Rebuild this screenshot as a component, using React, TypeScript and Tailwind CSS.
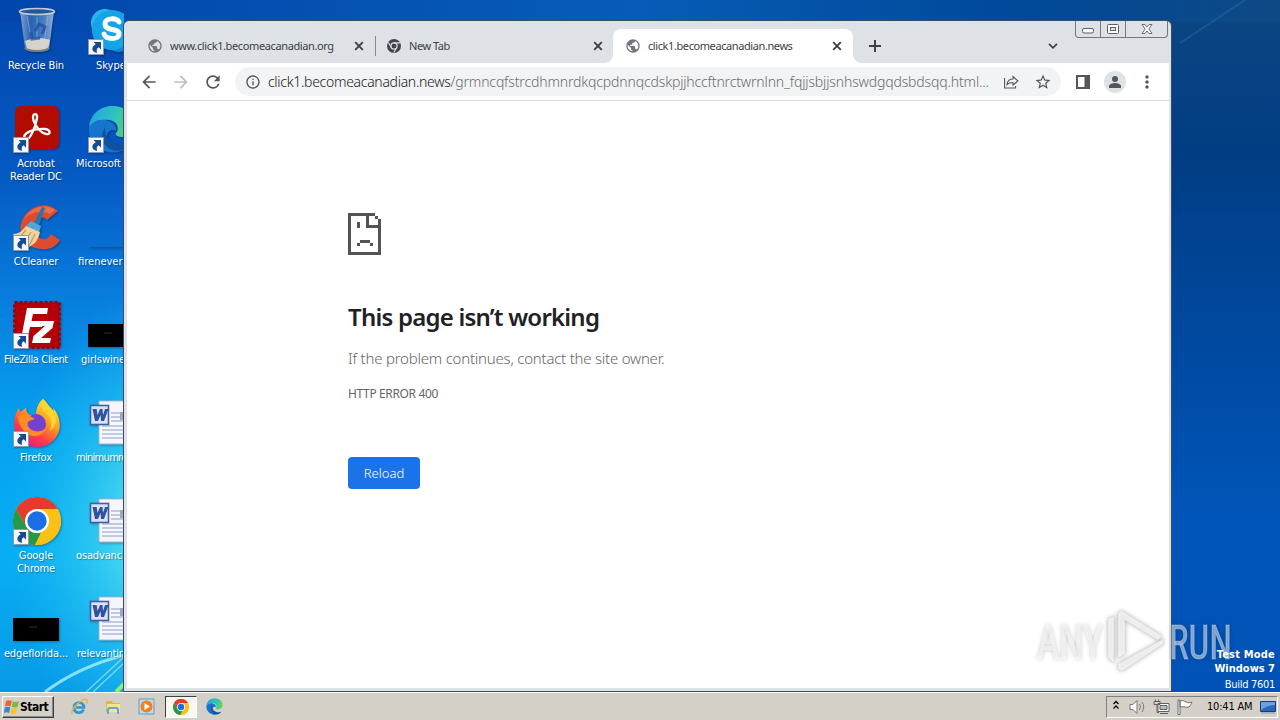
import React from "react";
import { MdArrowBack, MdArrowForward, MdRefresh, MdInfoOutline, MdStarBorder, MdMoreVert, MdPublic } from "react-icons/md";
import { clsx } from "clsx";

/* ──────────────────────────────────────────────────────────────────────────
 * Types
 * ────────────────────────────────────────────────────────────────────────── */

interface Shortcut {
  label: string;
  icon: React.ReactNode;
  linked?: boolean;
  className?: string;
}

interface TabProps {
  title: string;
  icon: React.ReactNode;
  active?: boolean;
  className?: string;
  titleClassName?: string;
}

/* ──────────────────────────────────────────────────────────────────────────
 * App icons
 * ────────────────────────────────────────────────────────────────────────── */

const ChromeIcon = ({ className }: { className?: string }) => (
  <svg viewBox="0 0 48 48" className={className}>
    <circle cx="24" cy="24" r="24" fill="#fbc116" />
    <path d="M24 24 13.6 30 3.2 12A24 24 0 0 1 44.8 12H24z" fill="#e33b2e" />
    <path d="M3.2 12 13.6 30a12 12 0 0 0 14.5 5.3L22 47.9A24 24 0 0 1 3.2 12z" fill="#279847" />
    <path d="M24 12h20.8A24 24 0 0 1 22 47.9L34.4 30a12 12 0 0 0 0-12z" fill="#fbc116" />
    <circle cx="24" cy="24" r="12" fill="#fff" />
    <circle cx="24" cy="24" r="9.7" fill="#1b6ee5" />
  </svg>
);

const EdgeIcon = ({ className }: { className?: string }) => (
  <svg viewBox="0 0 48 48" className={className}>
    <defs>
      <linearGradient id="edgeTop" x1="0" x2="1" y1="0.3" y2="0.5">
        <stop offset="0" stopColor="#22a6e2" />
        <stop offset="0.55" stopColor="#2fc3bf" />
        <stop offset="1" stopColor="#64d84c" />
      </linearGradient>
    </defs>
    <path d="M1 23C2 9 12 1 25 1c13 0 22 9 22 19 0 8-6 12-13 12-5 0-7-2-6-4 4-5 1-12-7-13C12 14 4 17 1 23z" fill="url(#edgeTop)" />
    <path d="M1 23c3-6 9-9 16-8 8 1 12 6 11 11-3-2-8-1-9 4-2 8 6 14 17 12 3-1 5-2 7-3C37 46 29 49 20 47 8 44 0 34 1 23z" fill="#1674cc" />
    <path d="M17 22c-4 7-4 14 1 19 4 4 10 6 17 4 4-1 7-4 9-7-6 4-15 3-20-1-5-3-7-8-7-15z" fill="#10529f" />
  </svg>
);

const RecycleBinIcon = () => (
  <svg viewBox="0 0 48 48" className="size-12">
    <defs>
      <linearGradient id="binGlass" x1="0" x2="1" y1="0" y2="0">
        <stop offset="0" stopColor="#8fb0dc" />
        <stop offset="0.3" stopColor="#2f69b4" />
        <stop offset="0.7" stopColor="#4f86c8" />
        <stop offset="1" stopColor="#a5bfe2" />
      </linearGradient>
    </defs>
    <path d="M7 4h34l-5 38c-4 4-20 4-24 0z" fill="url(#binGlass)" opacity="0.9" />
    <path d="M12 34c5-3 19-4 25-1l-2 9c-4 3-17 3-21 0z" fill="#d6d3cc" />
    <path d="m14 9 5 27M24 10v24M35 9l-4 26" stroke="#c1d6ef" strokeWidth="1" opacity="0.4" />
    <path d="m22 24 4-7 6 3-3 7M18 25l1 7 8-1" stroke="#1c4f9a" strokeWidth="3" fill="none" opacity="0.7" />
    <ellipse cx="24" cy="4.5" rx="17.5" ry="3" fill="#24589e" stroke="#c3cbd4" strokeWidth="1.6" />
    <path d="M12 41c4 4 20 4 24 0" stroke="#777f88" strokeWidth="2" fill="none" />
  </svg>
);

const SkypeIcon = () => (
  <svg viewBox="0 0 48 48" className="size-12">
    <circle cx="17" cy="16" r="14" fill="#28b6ee" />
    <circle cx="31" cy="31" r="14" fill="#0b87d5" />
    <circle cx="24" cy="23" r="20" fill="#16a4e8" />
    <path d="M31 15c-2-4-14-5-14 2 0 8 14 3 14 10 0 6-13 6-15 0" stroke="#fff" strokeWidth="5" fill="none" strokeLinecap="round" />
  </svg>
);

const AcrobatIcon = () => (
  <svg viewBox="0 0 48 48" className="size-12">
    <rect x="2" y="1" width="44" height="43" rx="6" fill="#b30b00" />
    <path d="M12 34c-4-6 10-11 20-10 6 1 6 6 1 5-6-1-13-11-13-17 0-4 5-4 4 1-1 8-8 25-12 21z" stroke="#fff" strokeWidth="2.3" fill="none" strokeLinejoin="round" />
  </svg>
);

const CCleanerIcon = () => (
  <svg viewBox="0 0 48 48" className="size-12">
    <path d="M45 8 34 17c-3-4-9-3-11 2-4 8 1 17 8 17 4 0 6-3 7-5l9 6c-4 7-11 10-18 9C14 45 5 36 8 21 11 6 31-5 45 8z" fill="#df4b31" />
    <path d="M11 16C18 4 32 0 42 7l-5 4C27 6 17 10 11 16z" fill="#f17a4b" opacity="0.7" />
    <path d="m29 4 3 1-6 17-5-2z" fill="#2675ae" />
    <path d="m18 18 10 5-2 6-13-6z" fill="#50a7dc" />
    <path d="m13 23 14 6c-2 9-6 13-12 15L0 31c6 0 9-3 13-8z" fill="#eed49c" />
    <path d="M13 27 6 35m12-6-7 11m11-9-6 12" stroke="#c89a59" strokeWidth="1.2" />
  </svg>
);

const FileZillaIcon = () => (
  <svg viewBox="0 0 48 48" className="size-12">
    <rect x="1.5" y="1.5" width="45" height="45" fill="#b60007" stroke="#9c0209" strokeWidth="3" strokeDasharray="3 2" />
    <path d="M8 38 14 7h21l-1 6H20l-1.500 7H30l-1 6H17l-2.500 12z" fill="#fff" />
    <path d="M24 20h17l-1.500 7L28 37h10l-1 5H19l1.500-7L32 25h-9z" fill="#fff" />
  </svg>
);

const FirefoxIcon = () => (
  <svg viewBox="0 0 48 48" className="size-12">
    <defs>
      <linearGradient id="foxBody" x1="0.8" x2="0.2" y1="0" y2="1">
        <stop offset="0" stopColor="#fff044" />
        <stop offset="0.4" stopColor="#ff9a20" />
        <stop offset="0.7" stopColor="#ff3b4b" />
        <stop offset="1" stopColor="#e31587" />
      </linearGradient>
    </defs>
    <path d="M30 0c4 3 6 7 8 11l3 2-1-4c6 6 8 16 6 23-3 10-12 16-22 16C12 48 2 39 1 27c0-7 1-13 5-18l1 4 6-4c0 3 1 5 4 7h6c0-6 2-12 7-16z" fill="url(#foxBody)" />
    <circle cx="23" cy="25" r="10" fill="#7542cf" />
    <path d="M5 17c6-3 13 0 17 3l-6 2c-3 3-1 7 3 9 6 3 12 1 14-3-1 10-16 12-21 5-5-5-7-12-7-16z" fill="#ff8b21" />
    <path d="M30 0c-3 7 0 11 4 15 5 5 5 11 3 17 9-6 7-18 1-23-3-3-5-6-8-9z" fill="#ffd52e" />
  </svg>
);

const WordIcon = () => (
  <svg viewBox="0 0 48 48" className="size-12">
    <path d="M11 2h33v43H11z" fill="#f4f6fc" stroke="#a9b5d2" />
    <path d="M23 14h18M23 18h18M23 22h18M14 27h28M14 31h28M14 35h28M14 39h28" stroke="#8e9dc8" />
    <path d="M32 13h9v8h-9z" fill="#a2a8b8" />
    <rect x="2.5" y="6.5" width="18" height="19" fill="#dae4f5" stroke="#405fa4" strokeWidth="1.6" />
    <path d="m4.500 10 2.500 12h3l2.500-6 .5 6h3L20.500 10h-3.500l-2 6-.5-6h-2.500l-2.500 6-.8-6z" fill="#31539f" />
  </svg>
);

const BlackThumb = () => (
  <svg viewBox="0 0 48 48" className="size-12">
    <path d="M0 23h46v23H0z" />
    <path d="M16 32h8" stroke="#353518" />
  </svg>
);

const ThinThumb = () => (
  <svg viewBox="0 0 48 48" className="size-12">
    <path d="M2 44.500h46" stroke="#17568e" />
  </svg>
);

const LinkBadge = () => (
  <svg viewBox="0 0 16 16" className="absolute bottom-0 left-0 size-4">
    <path d="M.5.5h15v15H.5z" fill="#f5f7fa" stroke="#8c9aad" />
    <path d="M5.500 3H13v7.500l-2.300-2.200C8.500 9.500 8.500 11 9 14 3 12.500 3 8 7.800 5.200z" fill="#174a91" />
  </svg>
);

/* ──────────────────────────────────────────────────────────────────────────
 * Desktop
 * ────────────────────────────────────────────────────────────────────────── */

const firstColumn: Shortcut[] = [
  { label: "Recycle Bin", icon: <RecycleBinIcon /> },
  { label: "Acrobat\nReader DC", icon: <AcrobatIcon />, linked: true },
  { label: "CCleaner", icon: <CCleanerIcon />, linked: true },
  { label: "FileZilla Client", icon: <FileZillaIcon />, linked: true },
  { label: "Firefox", icon: <FirefoxIcon />, linked: true },
  { label: "Google\nChrome", icon: <ChromeIcon className="size-12" />, linked: true },
  { label: "edgeflorida...", icon: <BlackThumb /> },
];

const secondColumn: Shortcut[] = [
  { label: "Skype", icon: <SkypeIcon />, linked: true, className: "pl-[22px]" },
  { label: "Microsoft", icon: <EdgeIcon className="size-12" />, linked: true, className: "pl-[2px]" },
  { label: "firenever", icon: <ThinThumb />, className: "pl-[4px]" },
  { label: "girlswine", icon: <BlackThumb />, className: "pl-[7px]" },
  { label: "minimumre", icon: <WordIcon />, className: "pl-[2px] tracking-[-0.7px]" },
  { label: "osadvanc", icon: <WordIcon />, className: "pl-[2px] tracking-[-0.15px]" },
  { label: "relevantin", icon: <WordIcon />, className: "pl-[3px] tracking-[-0.2px]" },
];

function DesktopShortcut({ label, icon, linked, className }: Shortcut) {
  return (
    <div className="flex h-[98px] w-[75px] shrink-0 flex-col items-center">
      <div className="relative ml-px size-12 drop-shadow-[1px_1px_1px_rgba(0,0,0,0.3)]">
        {icon}
        {linked && <LinkBadge />}
      </div>
      <div
        className={clsx(
          "mt-1 whitespace-pre text-[11px] leading-[13px] text-white [text-shadow:1px_1px_1px_rgba(0,0,0,0.35)]",
          className ? "self-stretch text-left" : "-ml-px text-center tracking-[-0.1px]",
          label === "FileZilla Client" && "tracking-[-0.35px]",
          className
        )}
      >
        {label}
      </div>
    </div>
  );
}

const Wallpaper = () => (
  <svg viewBox="0 0 1280 692" className="absolute inset-0 h-[692px] w-[1280px]">
    <defs>
      <linearGradient id="skyLeft" x1="0" x2="0" y1="0" y2="1">
        <stop offset="0" stopColor="#0246ad" />
        <stop offset="0.25" stopColor="#0559c2" />
        <stop offset="0.42" stopColor="#087bdd" />
        <stop offset="0.62" stopColor="#05a2ef" />
        <stop offset="0.8" stopColor="#08aef3" />
        <stop offset="1" stopColor="#0799e7" />
      </linearGradient>
      <radialGradient id="glow">
        <stop offset="0" stopColor="#61e6f0" />
        <stop offset="1" stopColor="#19c2f4" stopOpacity="0" />
      </radialGradient>
      <linearGradient id="skyRight" x1="0" x2="0" y1="0" y2="1">
        <stop offset="0" stopColor="#0c4782" />
        <stop offset="0.22" stopColor="#013d83" />
        <stop offset="0.48" stopColor="#00489f" />
        <stop offset="0.75" stopColor="#0056b8" />
        <stop offset="1" stopColor="#0052b7" />
      </linearGradient>
      <linearGradient id="skyTop">
        <stop offset="0" stopColor="#0246ad" />
        <stop offset="0.5" stopColor="#075cb7" />
        <stop offset="0.8" stopColor="#004898" />
        <stop offset="1" stopColor="#0e4984" />
      </linearGradient>
    </defs>
    <path d="M0 0h1280v692H0z" fill="url(#skyLeft)" />
    <path d="M1150 0h130v692h-130z" fill="url(#skyRight)" />
    <path d="M0 0h1280v22H0z" fill="url(#skyTop)" />
    <ellipse cx="150" cy="530" rx="140" ry="240" fill="url(#glow)" />
    <path d="M45 692c20-15 48-29 80-37" stroke="#b0f4ff" strokeWidth="3" fill="none" opacity="0.75" />
    <path d="m86 692 39-36M93 692l32-30" stroke="#9beffa" strokeWidth="1.500" opacity="0.65" />
    <path d="m116 692 9-9" stroke="#8bf16d" strokeWidth="4" />
    <path d="m1180 43 65-43" stroke="#3c73ac" strokeWidth="2" opacity="0.35" />
  </svg>
);

/* ──────────────────────────────────────────────────────────────────────────
 * Browser
 * ────────────────────────────────────────────────────────────────────────── */

const ChromeMono = () => (
  <svg viewBox="0 0 14 14" className="size-[14px] shrink-0">
    <circle cx="7" cy="7" r="7" fill="#41464d" />
    <circle cx="7" cy="7" r="3.100" fill="none" stroke="#dee1e6" strokeWidth="1.200" />
    <path d="M7 3.900h6M4.300 8.500 1.300 3.500M9.700 8.500 6.800 13.500" stroke="#dee1e6" strokeWidth="1.100" />
  </svg>
);

function Tab({ title, icon, active, className, titleClassName }: TabProps) {
  return (
    <div
      className={clsx(
        "relative flex h-[34px] shrink-0 items-center text-[11px] text-[#3c4043]",
        active && "rounded-t-lg bg-white",
        className
      )}
    >
      {active && (
        <>
          <div className="absolute bottom-0 -left-2 size-2 bg-[radial-gradient(circle_at_0_0,transparent_7.5px,white_8px)]" />
          <div className="absolute bottom-0 -right-2 size-2 bg-[radial-gradient(circle_at_100%_0,transparent_7.5px,white_8px)]" />
        </>
      )}
      {icon}
      <span className={clsx("whitespace-nowrap", titleClassName)}>{title}</span>
      <svg viewBox="0 0 10 10" className="ml-auto size-[10px]" stroke="currentColor" strokeWidth="1.900">
        <path d="m1.200 1.200 7.600 7.600m0-7.600-7.600 7.600" />
      </svg>
    </div>
  );
}

const CaptionButtons = () => (
  <div className="absolute right-px top-0 flex h-[17px] rounded-b-[4px] border border-t-0 border-[#74787e]">
    <div className="flex w-[25px] items-center justify-center border-r border-[#74787e]">
      <svg viewBox="0 0 12 6" className="mt-1 h-[6px] w-[12px]">
        <rect x=".5" y=".5" width="11" height="4.500" rx="1.500" fill="#fff" stroke="#5b5f66" />
      </svg>
    </div>
    <div className="flex w-[25px] items-center justify-center border-r border-[#74787e]">
      <svg viewBox="0 0 12 10" className="h-[10px] w-[12px]">
        <rect x=".5" y=".5" width="11" height="9" rx="1" fill="#fff" stroke="#5b5f66" />
        <rect x="3.500" y="3.500" width="5" height="3" fill="#dee1e6" stroke="#5b5f66" />
      </svg>
    </div>
    <div className="flex w-[41px] items-center justify-center">
      <svg viewBox="0 0 12 10" className="h-[10px] w-[12px]">
        <path d="M1 .5h3L6 3 8 .5h3L7.800 5 11 9.500H8L6 7 4 9.500H1L4.200 5z" fill="#fff" stroke="#5b5f66" strokeWidth=".9" />
      </svg>
    </div>
  </div>
);

const SadPage = () => (
  <svg viewBox="0 0 33 42" className="h-[42px] w-[33px]" shapeRendering="crispEdges" fill="#535353">
    <path d="M0 0h27v3H3v36h27V15H18V3h3v9h9V6h3v36H0z" />
    <path d="M27 3h3v3h-3zM9 9h3v6H9zM12 27h10v3H12zM9 30h3v3H9zM22 30h3v3h-3z" />
  </svg>
);

function BrowserWindow() {
  return (
    <div className="absolute left-[123px] top-[20px] flex h-[672px] w-[1049px] flex-col rounded-t-md border border-[#394c61] bg-[#dfe1e6] pb-[3px] pl-[3px] pr-[2px] font-['Noto_Sans','Open_Sans',sans-serif]">
      {/* ── TAB STRIP ── */}
      <div className="relative flex h-[42px] shrink-0 items-end rounded-t-md bg-[#dee1e6]">
        <Tab
          title="www.click1.becomeacanadian.org"
          icon={<MdPublic className="-ml-px size-4 shrink-0 text-[#73777c]" />}
          className="w-[248px] pl-[21px] pr-[11px]"
          titleClassName="ml-[7px] tracking-[-0.38px]"
        />
        <div className="mb-[7px] h-5 w-px bg-[#85898f]" />
        <Tab
          title="New Tab"
          icon={<ChromeMono />}
          className="w-[237px] pl-[11px] pr-[10px]"
          titleClassName="ml-[8px] tracking-[-0.45px]"
        />
        <Tab
          active
          title="click1.becomeacanadian.news"
          icon={<MdPublic className="-ml-px size-4 shrink-0 text-[#73777c]" />}
          className="w-[240px] pl-[13px] pr-[11px]"
          titleClassName="ml-[7px] tracking-[-0.41px]"
        />
        <svg viewBox="0 0 12 12" className="mb-[11px] ml-[16px] size-3">
          <path d="M6 0v12M0 6h12" stroke="#3c4043" strokeWidth="2" />
        </svg>
        <svg viewBox="0 0 10 6" className="mb-[14px] ml-[167px] h-[6px] w-[10px]">
          <path d="m1 .8 4 4 4-4" fill="none" stroke="#3c4043" strokeWidth="1.700" />
        </svg>
        <CaptionButtons />
      </div>

      {/* ── TOOLBAR ── */}
      <div className="flex h-[38px] shrink-0 items-center border-b border-[#d8dadd] bg-white pl-[12px] text-[#53575c]">
        <MdArrowBack className="size-5" />
        <MdArrowForward className="ml-3 size-5 text-[#bcbec1]" />
        <MdRefresh className="ml-3 size-5" />
        <div className="ml-[12px] flex h-[29px] w-[826px] shrink-0 items-center rounded-full bg-[#f1f3f4] pl-[10px]">
          <MdInfoOutline className="size-4 shrink-0" />
          <div className="ml-[7px] w-[724px] whitespace-nowrap text-[14px] font-light">
            <span className="tracking-[-0.3px] text-[#202124]">click1.becomeacanadian.news</span>
            <span className="tracking-[-0.145px] text-[#696d72]">/grmncqfstrcdhmnrdkqcpdnnqcdskpjjhccftnrctwrnlnn_fqjjsbjjsnhswdgqdsbdsqq.html...</span>
          </div>
          <svg viewBox="0 0 16 16" className="ml-[11px] size-4 shrink-0" fill="none" stroke="currentColor" strokeWidth="1.100">
            <path d="M1.600 4v10h11v-2M4 10.500c.5-4 3-5.500 6-5.500V2.500L15 7l-5 4V8.500c-3 0-4.500.5-6 2z" />
          </svg>
          <MdStarBorder className="ml-[15px] size-[18px] shrink-0" />
        </div>
        <svg viewBox="0 0 14 14" className="ml-[15px] size-[14px] shrink-0">
          <path d="M1 1h12v12H1z" fill="none" stroke="currentColor" strokeWidth="2" />
          <path d="M8.500 1H13v12H8.500z" fill="currentColor" />
        </svg>
        <div className="ml-[14px] flex size-[22px] shrink-0 items-center justify-center rounded-full bg-[#dee1e6]">
          <svg viewBox="0 0 12 12" className="size-3" fill="currentColor">
            <circle cx="6" cy="3" r="3" />
            <path d="M0 12v-2c0-2 4-3 6-3s6 1 6 3v2z" />
          </svg>
        </div>
        <MdMoreVert className="ml-[11px] size-5" />
      </div>

      {/* ── ERROR PAGE ── */}
      <div className="flex min-h-0 flex-1 flex-col items-start bg-white pl-[221px] pt-[112px] text-[#646568]">
        <SadPage />
        <h1 className="mt-[46px] whitespace-nowrap text-[24px] font-semibold leading-8 tracking-[-0.78px] text-[#202124]">This page isn’t working</h1>
        <p className="mt-[14px] whitespace-nowrap text-[15px] font-light leading-[22px] tracking-[-0.22px]">If the problem continues, contact the site owner.</p>
        <p className="mt-[16px] whitespace-nowrap text-[12px] leading-[18px] tracking-[-0.36px]">HTTP ERROR 400</p>
        <button className="mt-[54px] h-8 w-[72px] rounded-[4px] bg-[#1a73e8] pt-px text-[13px] font-light text-white">Reload</button>
      </div>
    </div>
  );
}

/* ──────────────────────────────────────────────────────────────────────────
 * Taskbar
 * ────────────────────────────────────────────────────────────────────────── */

const WindowsFlag = () => (
  <svg viewBox="0 0 16 16" className="size-4">
    <path d="M2 2c2-1 4-1 6 0L6.500 7.500c-2-1-4-1-5.500 0z" fill="#e76735" />
    <path d="M9 2.300c2 1 4 1 6 0L13.500 8c-2 1-4 .7-5.800-.2z" fill="#78b943" />
    <path d="M.8 8.500c2-1 4-1 5.500 0L5 14c-2-1-3.500-1-5 0z" fill="#3984cf" />
    <path d="M7.400 8.800c2 1 4 1 5.800 0L12 14c-2 1-4 1-6 0z" fill="#f5c42e" />
  </svg>
);

const ExplorerE = () => (
  <svg viewBox="0 0 18 18" className="size-[18px]">
    <path d="M13.500 11.500c-2 5-9.500 4-9.500-2C4 3 14 3 14 9.500H6" fill="none" stroke="#2c98d8" strokeWidth="2.700" />
    <path d="M2.500 16C-1 12 14-2 17 2c1 1 0 3-1 4" fill="none" stroke="#e6b63d" strokeWidth="1.400" />
  </svg>
);

const FolderIcon = () => (
  <svg viewBox="0 0 18 18" className="size-[18px]">
    <path d="M2 3h6l1 2h7v9H2z" fill="#e2b54b" />
    <path d="M3 6h13v8H3z" fill="#f8e48e" />
    <path d="M4 16v-4q0-2 2-2h6q2 0 2 2v4" fill="none" stroke="#5da9d6" strokeWidth="2" />
  </svg>
);

const MediaIcon = () => (
  <svg viewBox="0 0 17 17" className="size-[17px]">
    <path d="M1 1h15v15H1z" fill="#b9daf1" stroke="#6c99ba" />
    <circle cx="8.500" cy="8.500" r="6" fill="#f28117" />
    <path d="m6.500 5 5.500 3.500L6.500 12z" fill="#fff" />
  </svg>
);

const TrayIcons = () => (
  <>
    <svg viewBox="0 0 8 10" className="mb-[3px] ml-[5px] h-[10px] w-[8px]" fill="none" stroke="#000" strokeWidth="1.300">
      <path d="m1.500 4 2.500-2.500L6.500 4M1.500 8.500 4 6l2.500 2.500" />
    </svg>
    <svg viewBox="0 0 17 16" className="ml-[9px] h-[16px] w-[17px]" fill="#fff" stroke="#77777a">
      <path d="M1 5.500h3l4-4v13l-4-4H1z" />
      <path d="M10.500 5q2 3 0 6M13 3q3.500 5 0 10" fill="none" />
    </svg>
    <svg viewBox="0 0 17 16" className="ml-[7px] h-[16px] w-[17px]" fill="#fff" stroke="#5f6062">
      <path d="M5 4.500h11v8H5z" />
      <path d="M7 6.500h7v4H7z" fill="#b8bac0" />
      <path d="M7 14.500h8M1 2.500h6v3H1zM2.500.5v2M5.500.5v2M4 5.500v8h2" fill="none" />
    </svg>
    <svg viewBox="0 0 17 16" className="ml-[7px] h-[16px] w-[17px]" fill="#fff" stroke="#6c6d70">
      <path d="M1 1h2v14.500H1zM3 2c3-1 4 0 6 1 2 1 4 1 6 0-1 2-1 3-3 5-3 1-5-1-9 0z" />
    </svg>
  </>
);

function Taskbar() {
  return (
    <div className="flex h-[28px] items-center border-t border-white bg-[#d4d0c8] px-[2px]">
      <div className="flex h-[22px] w-[52px] items-center border border-b-[#404040] border-l-white border-r-[#404040] border-t-white pl-px shadow-[inset_-1px_-1px_0_#888]">
        <WindowsFlag />
        <span className="text-[12px] font-bold tracking-[-0.5px] text-black">Start</span>
      </div>
      <div className="ml-[16px]"><ExplorerE /></div>
      <div className="ml-[16px]"><FolderIcon /></div>
      <div className="ml-[16px]"><MediaIcon /></div>
      <div className="ml-[10px] flex h-[22px] w-[32px] items-center justify-center border border-b-white border-l-[#404040] border-r-white border-t-[#404040] bg-[#f8f7f4]">
        <ChromeIcon className="size-4" />
      </div>
      <EdgeIcon className="ml-[9px] size-[17px]" />
      <div className="ml-auto flex h-[22px] w-[172px] items-center border border-b-white border-l-[#808080] border-r-white border-t-[#808080]">
        <TrayIcons />
        <span className="ml-[13px] whitespace-nowrap pt-[2px] text-[11px] tracking-[-0.2px] text-black">10:41 AM</span>
        <svg viewBox="0 0 16 13" className="ml-auto mr-px mt-px h-[13px] w-[16px]">
          <path d="M.5.5h15v10H.5z" fill="#2869bc" stroke="#153c83" />
          <path d="M1 1h14v3C9 4 5 6 1 9z" fill="#6ba2e0" />
          <path d="M1 12h14" stroke="#8295b8" />
        </svg>
      </div>
    </div>
  );
}

const Watermark = () => (
  <svg viewBox="0 0 200 70" className="absolute left-[1034px] top-[605px] h-[70px] w-[200px] drop-shadow-[0_0_2px_rgba(0,0,0,0.4)]">
    <g fill="#fff" fillOpacity="0.5" stroke="#fff" strokeOpacity="0.3" fontFamily="Roboto, sans-serif" fontSize="48" fontWeight="400">
      <text x="3" y="54" textLength="66" lengthAdjust="spacingAndGlyphs">ANY</text>
      <text x="135" y="54" textLength="63" lengthAdjust="spacingAndGlyphs">RUN</text>
    </g>
    <path d="M74 52V14l6-3v47zM84 8l4-2 40 25-4 4-33-20v34l-7 4zM84 59l40-22 5-3v5L88 66l-4-2z" fill="#fff" fillOpacity="0.7" stroke="#d5d5d7" strokeOpacity="0.5" />
  </svg>
);

export default function App() {
  return (
    <div className="relative flex h-[720px] w-[1280px] flex-col overflow-hidden font-['DejaVu_Sans_Condensed','DejaVu_Sans',sans-serif] [font-stretch:condensed]">
      <Wallpaper />
      <div className="relative h-[692px] shrink-0">
        <div className="flex h-full w-[124px] overflow-hidden pt-[7px]">
          <div className="-ml-px w-[75px] shrink-0">
            {firstColumn.map((item) => (
              <DesktopShortcut key={item.label} {...item} />
            ))}
          </div>
          <div className="w-[75px] shrink-0">
            {secondColumn.map((item) => (
              <DesktopShortcut key={item.label} {...item} />
            ))}
          </div>
        </div>
        <BrowserWindow />
        <Watermark />
        <div className="absolute bottom-0 right-[5px] text-right text-[11px] leading-[14px] text-white">
          <div className="font-bold tracking-[0.2px]">Test Mode</div>
          <div className="font-bold">Windows 7</div>
          <div className="mt-[2px] tracking-[-0.3px]">Build 7601</div>
        </div>
      </div>
      <div className="relative"><Taskbar /></div>
    </div>
  );
}
